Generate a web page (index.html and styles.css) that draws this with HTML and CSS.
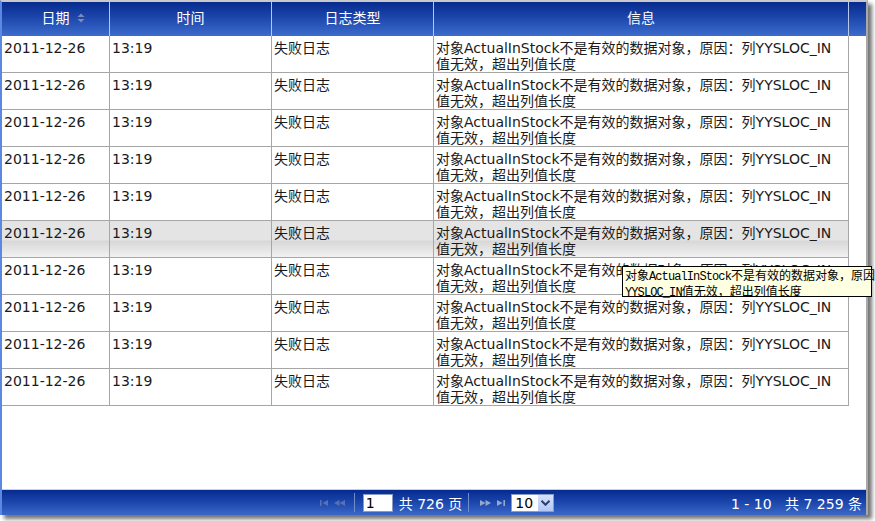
FILE: index.html
```html
<!DOCTYPE html>
<html lang="zh-CN">
<head>
<meta charset="utf-8">
<title>日志</title>
<link rel="stylesheet" href="styles.css">
</head>
<body>
<div class="frame">
  <div class="head">
    <div class="hcell"><span class="sortable">日期<svg class="sort" width="8" height="10" viewBox="0 0 8 10"><path d="M4 0.5 L7.5 4 L0.5 4 Z" fill="#7d8cb8"/><path d="M0.5 6 L7.5 6 L4 9.5 Z" fill="#7d8cb8"/></svg></span></div>
    <div class="hcell">时间</div>
    <div class="hcell">日志类型</div>
    <div class="hcell">信息</div>
    <div class="hcell hlast"></div>
  </div>
  <div class="body">
    <div class="row"><div class="cell">2011-12-26</div><div class="cell">13:19</div><div class="cell">失败日志</div><div class="cell">对象ActualInStock不是有效的数据对象，原因：列YYSLOC_IN<br>值无效，超出列值长度</div></div>
    <div class="row"><div class="cell">2011-12-26</div><div class="cell">13:19</div><div class="cell">失败日志</div><div class="cell">对象ActualInStock不是有效的数据对象，原因：列YYSLOC_IN<br>值无效，超出列值长度</div></div>
    <div class="row"><div class="cell">2011-12-26</div><div class="cell">13:19</div><div class="cell">失败日志</div><div class="cell">对象ActualInStock不是有效的数据对象，原因：列YYSLOC_IN<br>值无效，超出列值长度</div></div>
    <div class="row"><div class="cell">2011-12-26</div><div class="cell">13:19</div><div class="cell">失败日志</div><div class="cell">对象ActualInStock不是有效的数据对象，原因：列YYSLOC_IN<br>值无效，超出列值长度</div></div>
    <div class="row"><div class="cell">2011-12-26</div><div class="cell">13:19</div><div class="cell">失败日志</div><div class="cell">对象ActualInStock不是有效的数据对象，原因：列YYSLOC_IN<br>值无效，超出列值长度</div></div>
    <div class="row row-hover"><div class="cell">2011-12-26</div><div class="cell">13:19</div><div class="cell">失败日志</div><div class="cell">对象ActualInStock不是有效的数据对象，原因：列YYSLOC_IN<br>值无效，超出列值长度</div></div>
    <div class="row"><div class="cell">2011-12-26</div><div class="cell">13:19</div><div class="cell">失败日志</div><div class="cell">对象ActualInStock不是有效的数据对象，原因：列YYSLOC_IN<br>值无效，超出列值长度</div></div>
    <div class="row"><div class="cell">2011-12-26</div><div class="cell">13:19</div><div class="cell">失败日志</div><div class="cell">对象ActualInStock不是有效的数据对象，原因：列YYSLOC_IN<br>值无效，超出列值长度</div></div>
    <div class="row"><div class="cell">2011-12-26</div><div class="cell">13:19</div><div class="cell">失败日志</div><div class="cell">对象ActualInStock不是有效的数据对象，原因：列YYSLOC_IN<br>值无效，超出列值长度</div></div>
    <div class="row"><div class="cell">2011-12-26</div><div class="cell">13:19</div><div class="cell">失败日志</div><div class="cell">对象ActualInStock不是有效的数据对象，原因：列YYSLOC_IN<br>值无效，超出列值长度</div></div>
  </div>
  <div class="foot">
    <div class="pager">
      <span class="pbtn dim"><svg width="8" height="6" viewBox="0 0 8 6"><rect x="0" y="0" width="1.6" height="6" fill="currentColor"/><path d="M8 0 L8 6 L2.5 3 Z" fill="currentColor"/></svg></span>
      <span class="pbtn dim"><svg width="11" height="6" viewBox="0 0 11 6"><path d="M5.5 0 L5.5 6 L0 3 Z" fill="currentColor"/><path d="M11 0 L11 6 L5.5 3 Z" fill="currentColor"/></svg></span>
      <span class="psep"></span>
      <span class="pinput">1</span>
      <span class="ptext">共 726 页</span>
      <span class="psep"></span>
      <span class="pbtn lite"><svg width="11" height="6" viewBox="0 0 11 6"><path d="M0 0 L0 6 L5.5 3 Z" fill="currentColor"/><path d="M5.5 0 L5.5 6 L11 3 Z" fill="currentColor"/></svg></span>
      <span class="pbtn lite"><svg width="8" height="6" viewBox="0 0 8 6"><path d="M0 0 L0 6 L5.5 3 Z" fill="currentColor"/><rect x="6.4" y="0" width="1.6" height="6" fill="currentColor"/></svg></span>
      <span class="pselect"><span class="pval">10</span><span class="pdrop"><svg width="9" height="6" viewBox="0 0 9 6"><path d="M0.5 0.8 L4.5 4.8 L8.5 0.8" fill="none" stroke="#2b3f7a" stroke-width="2"/></svg></span></span>
    </div>
    <div class="summary">1 - 10&nbsp;&nbsp;&nbsp;共 7 259 条</div>
  </div>
</div>
<div class="tip">对象<span class="mono">ActualInStock</span>不是有效的数据对象，原因<br><span class="mono">YYSLOC_IN</span>值无效，超出列值长度</div>
</body>
</html>
```
FILE: styles.css
```css
html, body {
  margin: 0;
  padding: 0;
  background: #ffffff;
  overflow: hidden;
}
body {
  width: 875px;
  height: 521px;
  position: relative;
  font-family: "DejaVu Sans", "Noto Sans CJK SC", sans-serif;
  font-size: 14px;
  color: #1a1a1a;
}
.frame {
  width: 864px;
  height: 513px;
  border-left: 2px solid #5b88e0;
  border-top: 2px solid #c9c9c9;
  border-right: 2px solid #a9a9a9;
  display: flex;
  flex-direction: column;
  box-shadow: 4px 4px 4px rgba(0, 0, 0, 0.55);
  background: #fff;
}
.head {
  height: 34px;
  display: grid;
  grid-template-columns: 108px 162px 162px 415px 17px;
  background: linear-gradient(#072a8e 0%, #1c46ab 45%, #3d6ccd 100%);
  flex: none;
}
.hcell {
  display: flex;
  align-items: center;
  justify-content: center;
  padding-bottom: 4px;
  color: #fff;
  font-size: 14px;
  border-right: 1px solid #b9c8ea;
  box-sizing: border-box;
}
.hlast { border-right: none; }
.sortable { position: relative; }
.sort {
  position: absolute;
  left: 100%;
  top: 50%;
  margin-left: 7px;
  margin-top: -4px;
}
.body {
  flex: 1;
  background: #fff;
}
.row {
  display: grid;
  grid-template-columns: 108px 162px 162px 415px;
  height: 37px;
  width: 847px;
}
.cell {
  box-sizing: border-box;
  border-right: 1px solid #a6a6a6;
  border-bottom: 1px solid #a6a6a6;
  padding: 4px 2px 0 2px;
  line-height: 16px;
  white-space: nowrap;
  overflow: hidden;
}
.row-hover {
  background: linear-gradient(#e4e4e4 0%, #e4e4e4 50%, #d8d8d8 55%, #f3f3f3 100%);
}
.foot {
  height: 25px;
  flex: none;
  border-top: 1px solid #cfcfcf;
  background: linear-gradient(#052a92 0%, #1c47ad 50%, #3a68c8 100%);
  display: grid;
  grid-template-columns: 1fr auto 1fr;
  align-items: center;
  color: #fff;
}
.pager {
  grid-column: 2;
  display: flex;
  align-items: center;
  margin-left: 2px;
}
.pbtn {
  width: 16px;
  height: 18px;
  display: flex;
  align-items: center;
  justify-content: center;
}
.pbtn.dim { color: #5a70b3; }
.pbtn.lite { color: #97a6cc; }
.psep {
  width: 1px;
  height: 19px;
  background: #6f8dd0;
  margin: 0 8px 0 6px;
}
.pinput {
  width: 26px;
  height: 16px;
  background: #fff;
  border: 1px solid #8a9cc6;
  color: #000;
  font-size: 14px;
  line-height: 16px;
  padding-left: 2px;
}
.ptext {
  margin-left: 6px;
  font-size: 14px;
}
.pselect {
  margin-left: 2px;
  width: 41px;
  height: 16px;
  background: #fff;
  border: 1px solid #8a9cc6;
  display: flex;
  align-items: center;
  justify-content: space-between;
  color: #000;
}
.pval { padding-left: 3px; font-size: 14px; line-height: 16px; }
.pdrop {
  width: 15px;
  height: 16px;
  background: linear-gradient(#d6e2fa, #b3c8f2);
  display: flex;
  align-items: center;
  justify-content: center;
}
.summary {
  grid-column: 3;
  justify-self: end;
  padding-right: 4px;
  font-size: 14px;
}
.tip {
  position: absolute;
  left: 622px;
  top: 266px;
  width: 246px;
  height: 28px;
  padding: 1px 0 0 2px;
  background: #ffffe1;
  border: 1px solid #000;
  font-family: "Noto Sans CJK SC", sans-serif;
  font-size: 12px;
  line-height: 14px;
  white-space: nowrap;
  color: #000;
}
.mono {
  font-family: "Liberation Mono", monospace;
  font-size: 12px;
  letter-spacing: -0.9px;
}
```
